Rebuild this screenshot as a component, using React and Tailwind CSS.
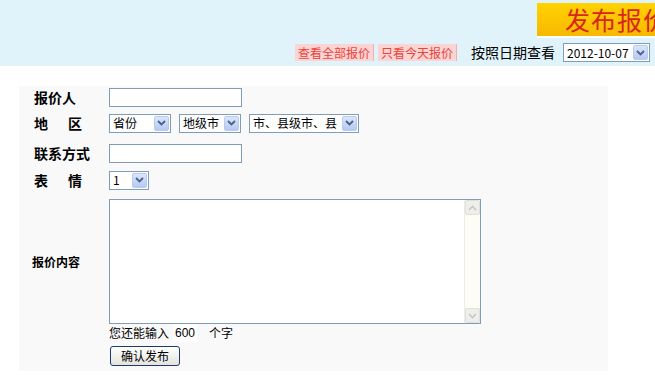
import React from "react";

const cjk = { fontFamily: '"SimSun", "Noto Sans CJK SC", sans-serif' };

// XP-style dropdown arrow button
const Arrow = () => (
  <span className="w-[15px] h-[15px] bg-gradient-to-b from-[#dbe6fb] to-[#b5c9f3] border border-[#b8cbee] rounded-[2px] flex items-center justify-center shrink-0">
    <svg width="9" height="6" viewBox="0 0 9 6">
      <path d="M1 1 L4.5 4.5 L8 1" stroke="#4d6185" strokeWidth="1.8" fill="none" />
    </svg>
  </span>
);

const FakeSelect = ({ text, width }) => (
  <div
    className="h-[19px] border border-[#7f9db9] bg-white flex items-center justify-between pl-[3px] pr-[1px] text-[12px] text-black"
    style={{ width }}
  >
    <span className="leading-none">{text}</span>
    <Arrow />
  </div>
);

const Label = ({ children }) => (
  <div className="w-[75px] text-[14px] font-bold text-black leading-none">{children}</div>
);

export default function App() {
  return (
    <div className="w-[655px] h-[375px] bg-white overflow-hidden relative" style={cjk}>
      {/* header */}
      <div className="h-[66px] bg-[#e0f3fb] flex flex-col items-end">
        <div className="mt-[3px] h-[35px] w-[118px] bg-gradient-to-b from-[#ffd200] to-[#f7b800] border-b-2 border-white flex items-center pl-[28px] overflow-hidden whitespace-nowrap">
          <span className="text-[25px] text-[#d8261b] leading-none tracking-[1px]">发布报价</span>
        </div>
        <div className="mt-[4px] flex items-center pr-[5px]">
          <span className="text-[12px] text-[#e8443a] bg-[#fdd4d4] border-r border-[#f3b0b0] px-[3px] h-[17px] flex items-center">查看全部报价</span>
          <span className="ml-[4px] text-[12px] text-[#e8443a] bg-[#fdd4d4] border-r border-[#f3b0b0] px-[3px] h-[17px] flex items-center">只看今天报价</span>
          <span className="ml-[14px] text-[14px] text-black">按照日期查看</span>
          <div className="ml-[8px]">
            <FakeSelect text="2012-10-07" width={87} />
          </div>
        </div>
      </div>

      {/* form panel */}
      <div className="mt-[20px] ml-[19px] w-[589px] h-[285px] bg-[#f9f9f9] pl-[15px] flex flex-col">
        <div className="flex items-center h-[22px]">
          <Label>报价人</Label>
          <div className="w-[133px] h-[19px] border border-[#7f9db9] bg-white" />
        </div>
        <div className="flex items-center h-[30px]">
          <Label>
            地<span className="ml-[20px]">区</span>
          </Label>
          <div className="flex gap-[8px]">
            <FakeSelect text="省份" width={62} />
            <FakeSelect text="地级市" width={62} />
            <FakeSelect text="市、县级市、县" width={110} />
          </div>
        </div>
        <div className="flex items-center h-[30px]">
          <Label>联系方式</Label>
          <div className="w-[133px] h-[19px] border border-[#7f9db9] bg-white" />
        </div>
        <div className="flex items-center h-[24px]">
          <Label>
            表<span className="ml-[20px]">情</span>
          </Label>
          <FakeSelect text="1" width={40} />
        </div>
        <div className="flex items-center mt-[7px]">
          <div className="w-[75px] text-[12px] font-bold text-black -ml-[2px] mr-[2px]">报价内容</div>
          <div className="w-[372px] h-[125px] border border-[#7f9db9] bg-white flex justify-end">
            <div className="w-[16px] h-full bg-[#fdfdf6] border-l border-[#ececec] flex flex-col justify-between">
              <div className="h-[15px] bg-[#eeeeea] border border-[#e0e0d8] rounded-[2px] flex items-center justify-center">
                <svg width="9" height="6" viewBox="0 0 9 6"><path d="M1 5 L4.5 1.5 L8 5" stroke="#c8c8c0" strokeWidth="1.6" fill="none" /></svg>
              </div>
              <div className="h-[15px] bg-[#eeeeea] border border-[#e0e0d8] rounded-[2px] flex items-center justify-center">
                <svg width="9" height="6" viewBox="0 0 9 6"><path d="M1 1 L4.5 4.5 L8 1" stroke="#c8c8c0" strokeWidth="1.6" fill="none" /></svg>
              </div>
            </div>
          </div>
        </div>
        <div className="ml-[75px] mt-[1px] text-[12px] text-black flex items-center h-[16px]">
          <span>您还能输入</span>
          <span className="ml-[4px] px-[2px] bg-white" style={{ fontFamily: '"Liberation Sans", sans-serif' }}>600</span>
          <span className="ml-[12px]">个字</span>
        </div>
        <div className="ml-[76px] mt-[5px]">
          <div className="w-[70px] h-[20px] border border-[#1c3a70] rounded-[3px] bg-gradient-to-b from-white to-[#e4e4dc] flex items-center justify-center text-[12px] text-black">
            确认发布
          </div>
        </div>
      </div>
    </div>
  );
}
